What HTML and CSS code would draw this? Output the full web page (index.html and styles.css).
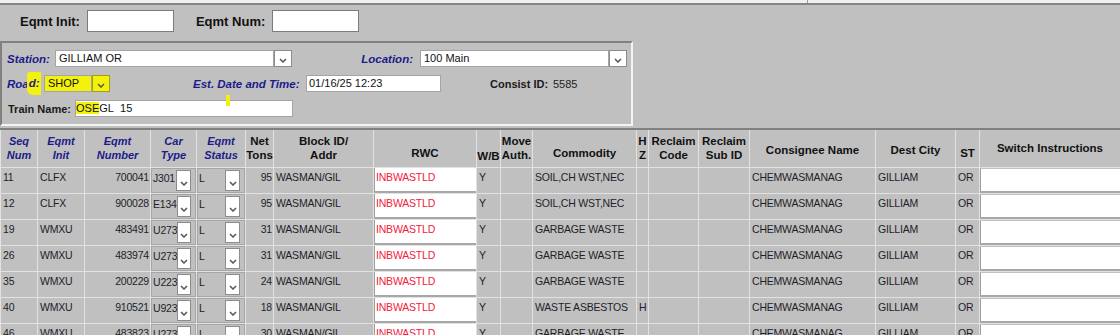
FILE: index.html
```html
<!DOCTYPE html>
<html>
  <head>
    <title>Consist</title>
    <link rel="stylesheet" href="styles.css">
  </head>
  <body>
    <div class="topbar"><div class="topbar-left"></div></div>

    <div class="lookup">
      <label class="lookup-label">Eqmt Init:</label>
      <input class="lookup-box first">
      <label class="lookup-label">Eqmt Num:</label>
      <input class="lookup-box">
    </div>

    <div class="criteria">
      <div class="crit-row">
        <span class="crit-label lbl-station">Station:</span>
        <div class="sel sel-station"><span class="sel-field">GILLIAM OR</span><span class="sel-btn"><svg width="8" height="5" viewBox="0 0 8 5"><path d="M1 1l3 3 3-3" fill="none" stroke="#555" stroke-width="1.5"/></svg></span></div>
        <span class="crit-label lbl-location">Location:</span>
        <div class="sel sel-location"><span class="sel-field">100 Main</span><span class="sel-btn"><svg width="8" height="5" viewBox="0 0 8 5"><path d="M1 1l3 3 3-3" fill="none" stroke="#555" stroke-width="1.5"/></svg></span></div>
      </div>
      <div class="crit-row">
        <span class="crit-label lbl-road">Roa<span class="mark road-mark">d:</span></span>
        <div class="sel sel-road"><span class="sel-field mark">SHOP</span><span class="sel-btn mark-btn"><svg width="8" height="5" viewBox="0 0 8 5"><path d="M1 1l3 3 3-3" fill="none" stroke="#555" stroke-width="1.5"/></svg></span></div>
        <span class="crit-label lbl-est">Est. Date and Time:</span>
        <span class="text-box box-date">01/16/25 12:23</span>
        <span class="plain-label lbl-consist">Consist ID:</span>
        <span class="consist-val">5585</span>
      </div>
      <div class="crit-row">
        <span class="plain-label lbl-train">Train Name:</span>
        <span class="text-box box-train"><span class="mark">OSE</span>GL&nbsp; 15</span>
      </div>
      <div class="pen-tick"></div>
    </div>

    <table class="consist">
      <colgroup>
        <col style="width:37px"><col style="width:47px"><col style="width:66px"><col style="width:46px">
        <col style="width:49px"><col style="width:28px"><col style="width:100px"><col style="width:103px">
        <col style="width:24px"><col style="width:32px"><col style="width:104px"><col style="width:12px">
        <col style="width:50px"><col style="width:51px"><col style="width:126px"><col style="width:80px">
        <col style="width:24px"><col style="width:141px">
      </colgroup>
      <thead>
        <tr class="head">
          <th class="nv">Seq<br>Num</th>
          <th class="nv">Eqmt<br>Init</th>
          <th class="nv">Eqmt<br>Number</th>
          <th class="nv">Car<br>Type</th>
          <th class="nv">Eqmt<br>Status</th>
          <th class="bk">Net<br>Tons</th>
          <th class="bk">Block ID/<br>Addr</th>
          <th class="bk low">RWC</th>
          <th class="bk lower">W/B</th>
          <th class="bk">Move<br>Auth.</th>
          <th class="bk low">Commodity</th>
          <th class="bk">H<br>Z</th>
          <th class="bk">Reclaim<br>Code</th>
          <th class="bk">Reclaim<br>Sub ID</th>
          <th class="bk mid">Consignee Name</th>
          <th class="bk mid">Dest City</th>
          <th class="bk low">ST</th>
          <th class="bk">Switch Instructions</th>
        </tr>
      </thead>
      <tbody id="rows"></tbody>
    </table>

    <script>
      const rows = [
        ['11','CLFX','700041','J301','L','95','SOIL,CH WST,NEC',''],
        ['12','CLFX','900028','E134','L','95','SOIL,CH WST,NEC',''],
        ['19','WMXU','483491','U273','L','31','GARBAGE WASTE',''],
        ['26','WMXU','483974','U273','L','31','GARBAGE WASTE',''],
        ['35','WMXU','200229','U223','L','24','GARBAGE WASTE',''],
        ['40','WMXU','910521','U923','L','18','WASTE ASBESTOS','H'],
        ['46','WMXU','483823','U273','L','30','GARBAGE WASTE','']
      ];
      const chev = '<span class="sel-btn tall"><svg width="8" height="5" viewBox="0 0 8 5"><path d="M1 1l3 3 3-3" fill="none" stroke="#555" stroke-width="1.5"/></svg></span>';
      const body = document.querySelector('#rows');
      rows.forEach(r => {
        const tr = document.createElement('tr');
        tr.innerHTML =
          '<td>' + r[0] + '</td>' +
          '<td>' + r[1] + '</td>' +
          '<td class="num">' + r[2] + '</td>' +
          '<td class="combo-cell"><div class="combo"><span>' + r[3] + '</span>' + chev + '</div></td>' +
          '<td class="combo-cell"><div class="combo"><span>' + r[4] + '</span>' + chev + '</div></td>' +
          '<td class="num">' + r[5] + '</td>' +
          '<td>WASMAN/GIL</td>' +
          '<td class="box-cell"><div class="rwc">INBWASTLD</div></td>' +
          '<td>Y</td>' +
          '<td></td>' +
          '<td>' + r[6] + '</td>' +
          '<td>' + r[7] + '</td>' +
          '<td></td><td></td>' +
          '<td>CHEMWASMANAG</td>' +
          '<td>GILLIAM</td>' +
          '<td>OR</td>' +
          '<td class="box-cell"><div class="switch"></div></td>';
        body.append(tr);
      });
    </script>
  </body>
</html>
```

FILE: styles.css
```css
body{
  margin:0;
  background:#c0c0c0;
  font-family:"Liberation Sans", Arial, sans-serif;
  color:#1e1e1e;
  overflow:hidden;
}
.topbar{
  height:3px;
  background:#f0f0f0;
  border-bottom:2px solid #858585;
  display:flex;
}
.topbar-left{
  width:807px;
  border-right:1px solid #9a9a9a;
}

/* lookup strip */
.lookup{
  display:flex;
  align-items:center;
  padding:5px 0 9px 20px;
}
.lookup-label{
  font-size:13px;
  font-weight:bold;
  color:#111;
  margin-right:7px;
}
.lookup-box{
  box-sizing:border-box;
  width:87px;
  height:22px;
  border:1px solid #7c7c7c;
  background:#fff;
  margin:0;
  padding:0;
}
.lookup-box.first{
  margin-right:22px;
}

/* criteria box */
.criteria{
  position:relative;
  box-sizing:border-box;
  width:633px;
  border:2px solid;
  border-color:#808080 #f4f4f4 #f4f4f4 #808080;
  padding:3px 0 3px 5px;
  margin-bottom:2px;
}
.crit-row{
  display:flex;
  align-items:center;
  height:25px;
}
.crit-label{
  font-size:11.5px;
  font-weight:bold;
  font-style:italic;
  color:#1b1b8a;
}
.plain-label{
  font-size:11px;
  font-weight:bold;
  color:#1a1a1a;
}
.lbl-station{ width:48px; }
.lbl-location{ margin-left:68px; text-align:right; padding-right:7px; box-sizing:border-box; width:60px; }
.lbl-road{ width:37px; display:flex; align-items:center; }
.lbl-est{ margin-left:83px; width:112px; }
.lbl-consist{ margin-left:49px; width:63px; }
.lbl-train{ margin-left:1px; width:67px; }
.consist-val{ font-size:11px; color:#222; }

.sel{
  display:flex;
  height:17px;
}
.sel-field{
  flex:1;
  box-sizing:border-box;
  background:#fff;
  border:1px solid #a4a4a4;
  font-size:11px;
  padding:1px 3px;
  line-height:13px;
  color:#111;
}
.sel-btn{
  box-sizing:border-box;
  width:18px;
  background:#fff;
  border:1px solid #8c8c8c;
  display:flex;
  align-items:center;
  justify-content:center;
  padding-top:3px;
}
.sel-station{ width:237px; }
.sel-location{ width:207px; }
.sel-road{ width:66px; }
.text-box{
  box-sizing:border-box;
  height:17px;
  background:#fff;
  border:1px solid #a4a4a4;
  font-size:11px;
  line-height:13px;
  padding:1px 2px;
  color:#111;
}
.box-date{ width:135px; margin-left:1px; }
.box-train{ width:218px; padding-left:0; }
.mark{ background:#f4f20c; }
.road-mark{
  padding:5px 1px 6px 2px;
  margin-left:-2px;
  border-radius:3px 0 0 6px;
}
.mark-btn{ background:#f4f20c; border-color:#a0a010; }
.pen-tick{
  position:absolute;
  left:224px;
  top:52px;
  width:4px;
  height:11px;
  background:#f2f00c;
}

/* consist table */
.consist{
  table-layout:fixed;
  width:1120px;
  border-collapse:collapse;
  border-top:2px solid #808080;
}
.consist th{
  box-sizing:border-box;
  height:38px;
  padding:0;
  border:1px solid #e2e2e2;
  border-top:none;
  font-size:11.5px;
  line-height:14px;
  vertical-align:middle;
  font-weight:bold;
}
.consist th.nv{
  font-style:italic;
  color:#1b1b8a;
  font-size:11px;
}
.consist th.bk{
  color:#111;
}
.consist th.mid{ padding-top:3px; }
.consist th.low{ padding-top:10px; }
.consist th.lower{ padding-top:16px; }
.consist td{
  height:25px;
  padding:3px 0 0 2px;
  box-sizing:border-box;
  border:1px solid #e2e2e2;
  font-size:10.5px;
  letter-spacing:-0.2px;
  line-height:13px;
  vertical-align:top;
  color:#1e1e28;
  white-space:nowrap;
  overflow:hidden;
}
.consist td.num{
  text-align:right;
  padding:3px 1px 0 0;
}
.consist td.combo-cell,
.consist td.box-cell{
  padding:0;
}
.combo{
  box-sizing:border-box;
  height:25px;
  border:1px solid #a6a6a6;
  display:flex;
  justify-content:space-between;
  padding:1px 4px 1px 1px;
}
.combo span:first-child{
  padding-top:2px;
}
.sel-btn.tall{
  width:15px;
  height:21px;
  align-items:flex-end;
  padding:0 0 4px;
}
.rwc{
  box-sizing:border-box;
  height:25px;
  background:#fff;
  border-left:1px solid #9c9c9c;
  border-bottom:2px solid #a8a8a8;
  color:#f2203c;
  padding:3px 0 0 1px;
}
.switch{
  box-sizing:border-box;
  height:24px;
  margin-top:1px;
  background:#fff;
  border-left:1px solid #9c9c9c;
  border-bottom:2px solid #a8a8a8;
}
```
